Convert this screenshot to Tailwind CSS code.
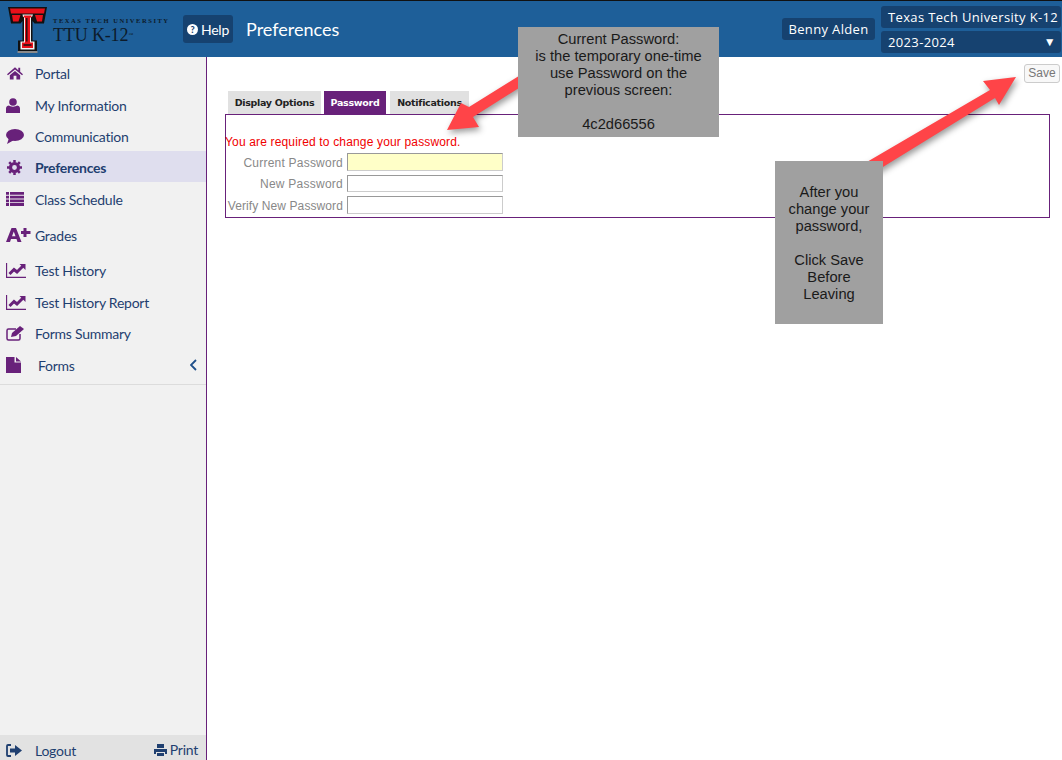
<!DOCTYPE html>
<html><head><meta charset="utf-8"><title>Preferences</title>
<script src="https://cdn.jsdelivr.net/npm/@tailwindcss/browser@4"></script></head>
<body class="m-0 bg-white overflow-hidden font-['Lato',sans-serif]">
<div class="relative w-[1062px] h-[760px] flex flex-col overflow-hidden">
  <header class="h-[57px] shrink-0 bg-[#1e5f99] border-t-[1px] border-[#111] flex items-start text-white">
    <svg class="ml-[8px] mt-[5px] shrink-0" width="40" height="47" viewBox="0 0 40 47">
      <path d="M0 1H39L36 17.500H26.500L24.500 15V34.500H29V46H10V34.500H14.500V15L12.500 17.500H3Z" fill="#111"/>
      <path d="M9.500 45H29.500V47H9.500Z" fill="#8a8a8a"/>
      <path d="M2 2.500H37L36 7.500H3Z" fill="#e8101a"/>
      <path d="M4 9H12.500L10.500 15.500H5ZM27 9H35L34 15.500H29Z" fill="#e8101a"/>
      <path d="M14.500 8.500H25L24 11H23V35.500H26.500V43.500H12.500V35.500H16V11H15Z" fill="#f2f2f2"/>
      <path d="M16 9.500H23.500V11.500H22V36.500H25V42H14V36.500H17V11.500H15.500Z" fill="#e8101a"/>
      <path d="M18.800 12V35.500M15.500 39H23.500" stroke="#111" stroke-width="1.300" fill="none"/>
    </svg>
    <div class="ml-[5px] w-[124px] shrink-0 text-[#0d1b2a] font-['Liberation_Serif',serif]">
      <div class="mt-[15px] text-[6.5px] leading-[9px] font-bold tracking-[1.55px] whitespace-nowrap">TEXAS TECH UNIVERSITY</div>
      <div class="text-[18px] leading-[22px] -mt-[1px] tracking-[-0.15px] whitespace-nowrap">TTU K-12<span class="text-[5px] align-top">™</span></div>
    </div>
    <div class="ml-[6px] mt-[14px] w-[50px] h-[28px] rounded-[3px] bg-[#164270] flex items-center justify-center gap-[3px] text-[14px] tracking-[-0.2px] shrink-0">
      <span class="w-[11px] h-[11px] rounded-full bg-white text-[#164270] text-[9px] font-black leading-[11px] text-center">?</span>Help
    </div>
    <div class="ml-[13px] mt-[16px] text-[18px] leading-[24px]">Preferences</div>
    <div class="ml-auto flex items-start font-['Open_Sans',sans-serif] text-[13px] tracking-[0.35px]">
      <div class="mt-[17px] h-[22px] w-[93px] bg-[#164270] rounded-[3px] leading-[22px] text-center whitespace-nowrap">Benny Alden</div>
      <div class="ml-[6px] mr-[1px] mt-[5px] w-[180px] flex flex-col gap-[3px]">
        <div class="h-[22px] bg-[#164270] rounded-[3px] leading-[22px] pl-[7px] whitespace-nowrap">Texas Tech University K-12</div>
        <div class="h-[22px] bg-[#164270] rounded-[3px] leading-[22px] pl-[7px] flex justify-between pr-[5px]"><span>2023-2024</span><span class="text-[12px]">▼</span></div>
      </div>
    </div>
  </header>
  <div class="flex-1 flex min-h-0">
    <aside class="w-[207px] shrink-0 bg-[#f1f1f1] border-r border-[#68217a] flex flex-col text-[14px] tracking-[-0.25px] text-[#1f3f70]">
      <nav class="pt-[1px] border-b border-[#dcdcdc] h-[328px] flex flex-col">
        <a class="h-[32px] flex items-center pb-[2px]">
          <svg class="ml-[7px] w-[16px]" height="14" viewBox="0 0 17 14" fill="#68217a"><path d="M8.500 1 0 8.200l1 1.200L8.500 3.200 16 9.400l1-1.200-3-2.500V1.500h-2v2.500ZM3 9.500V14h4V10h3v4h4V9.500L8.500 5Z"/></svg>
          <span class="ml-[12px]">Portal</span></a>
        <a class="h-[32px] flex items-center pb-[2px]">
          <svg class="ml-[6px] w-[17px]" height="15" viewBox="0 0 17 15" fill="#68217a"><circle cx="7" cy="4" r="3.800"/><path d="M0 15V10.500C0 8.500 1.500 7.500 3 7.500 4.500 9 9.500 9 11 7.500 12.500 7.500 14 8.500 14 10.500V15Z"/></svg>
          <span class="ml-[12px]">My Information</span></a>
        <a class="h-[29px] flex items-center">
          <svg class="ml-[6px] w-[18px]" height="15" viewBox="0 0 18 15" fill="#68217a"><ellipse cx="9" cy="6" rx="9" ry="6"/><path d="M3 9 1 15 8 11Z"/></svg>
          <span class="ml-[11px]">Communication</span></a>
        <a class="h-[31px] flex items-center pt-[1px] bg-[#dfdeee] font-bold">
          <svg class="ml-[6px] w-[17px]" height="15" viewBox="0 0 15 15" fill="none" stroke="#68217a"><circle cx="7.500" cy="7.500" r="4" stroke-width="3.200"/><path d="M7.500 0V15M0 7.500H15M2.200 2.200 12.800 12.800M12.800 2.200 2.200 12.800" stroke-width="2.500" stroke-dasharray="2.600 9.800 2.600"/></svg>
          <span class="ml-[12px]">Preferences</span></a>
        <a class="h-[36px] flex items-center pb-[2px]">
          <svg class="ml-[6px] w-[18px]" height="14" viewBox="0 0 18 14" fill="#68217a"><path d="M0 0H3V2.800H0ZM4 0H18V2.800H4ZM0 3.700H3V6.500H0ZM4 3.700H18V6.500H4ZM0 7.400H3V10.200H0ZM4 7.400H18V10.200H4ZM0 11.100H3V14H0ZM4 11.100H18V14H4Z"/></svg>
          <span class="ml-[11px]">Class Schedule</span></a>
        <a class="h-[36px] flex items-center pb-[2px]">
          <svg class="ml-[6px] w-[25px] shrink-0" height="15" viewBox="0 0 25 15" fill="#68217a"><path d="M5.500 0H10L15.500 14H11.500L10.500 11H5L4 14H0ZM7.800 3.500 6 8.200H9.500Z" fill-rule="evenodd"/><path d="M18 3H21V6H25V9H21V12H18V9H15.500V6H18Z" transform="translate(-.5 -3)"/></svg>
          <span class="ml-[4px]">Grades</span></a>
        <a class="h-[34px] flex items-center pb-[2px]">
          <svg class="ml-[6px] w-[20px] shrink-0" height="15" viewBox="0 0 20 15" fill="none" stroke="#68217a"><path d="M.5 0V14.500H20" stroke-width="1.300"/><path d="M3.500 11 8 6.500 11 9 17 3" stroke-width="3"/><path d="M13.500 1H19.500V7Z" fill="#68217a" stroke="none"/></svg>
          <span class="ml-[9px]">Test History</span></a>
        <a class="h-[30px] flex items-center pb-[2px]">
          <svg class="ml-[6px] w-[20px] shrink-0" height="15" viewBox="0 0 20 15" fill="none" stroke="#68217a"><path d="M.5 0V14.500H20" stroke-width="1.300"/><path d="M3.500 11 8 6.500 11 9 17 3" stroke-width="3"/><path d="M13.500 1H19.500V7Z" fill="#68217a" stroke="none"/></svg>
          <span class="ml-[9px]">Test History Report</span></a>
        <a class="h-[32px] flex items-center pb-[2px]">
          <svg class="ml-[6px] w-[18px] shrink-0" height="15" viewBox="0 0 18 15" fill="none" stroke="#68217a"><path d="M14 8V12.500Q14 14 12.500 14H2.500Q1 14 1 12.500V4.500Q1 3 2.500 3H10" stroke-width="1.500"/><path d="M5 11 6 7 14 0 18 3 10 10Z" fill="#68217a" stroke="none"/></svg>
          <span class="ml-[11px]">Forms Summary</span></a>
        <a class="h-[32px] flex items-center pb-[2px]">
          <svg class="ml-[6px] w-[15px] shrink-0" height="16" viewBox="0 0 15 16" fill="#68217a"><path d="M0 0H8.500V5.500H15V16H0ZM10 0 15 4.500H10Z"/></svg>
          <span class="ml-[17px]">Forms</span>
          <svg class="ml-auto mr-[9px]" width="7" height="12" viewBox="0 0 7 12" fill="none" stroke="#1f4f8a" stroke-width="1.800"><path d="M6 1 1 6 6 11"/></svg></a>
      </nav>
      <div class="mt-auto h-[25px] bg-[#e2e2e2] flex items-center pt-[6px]">
        <svg class="ml-[6px] w-[16px]" height="13" viewBox="0 0 16 13" fill="#1f3f70"><path d="M5 1H2Q1 1 1 2V11Q1 12 2 12H5" fill="none" stroke="#1f3f70" stroke-width="1.800"/><path d="M4 4.500H9V1L16 6.500 9 12V8.500H4Z"/></svg>
        <span class="ml-[13px]">Logout</span>
        <span class="ml-auto mr-[8px] flex items-center gap-[3px] -mt-[2px]">
          <svg width="13" height="12" viewBox="0 0 13 12" fill="#1f3f70"><path d="M3 0H10V4H3ZM0 5H13V10H11V8H2V10H0ZM3 9H10V12H3Z"/></svg>Print</span>
      </div>
    </aside>
    <main class="relative flex-1 font-['Liberation_Sans',sans-serif]">
      <div class="flex justify-end pt-[7px] pr-[2px]">
        <button class="w-[36px] h-[19px] border border-[#ccc] rounded-[3px] bg-[#f8f8f8] text-[12px] leading-[17px] text-[#777] text-center">Save</button>
      </div>
      <div class="ml-[21px] mt-[8px] w-[822px] flex gap-[3px] text-[9.5px] tracking-[-0.3px] font-bold font-['DejaVu_Sans',sans-serif] text-[#222]">
        <div class="w-[93px] h-[23px] leading-[24px] text-center bg-[#e1e1e1]">Display Options</div>
        <div class="w-[62px] h-[23px] leading-[24px] text-center bg-[#68217a] text-white">Password</div>
        <div class="w-[79px] h-[23px] leading-[24px] text-center bg-[#e1e1e1] ml-[1px]">Notifications</div>
      </div>
      <div class="ml-[18px] w-[825px] h-[104px] border border-[#68217a] text-[12px]">
        <div class="mt-[19px] -ml-[1px] text-[#f00000] leading-[17px] tracking-[0.16px]">You are required to change your password.</div>
        <div class="grid grid-cols-[117px_156px] gap-x-[4px] text-right text-[#888] mt-[2px]">
          <label class="h-[22px] leading-[20px] tracking-[0.22px]">Current Password</label><div class="h-[18px] bg-[#ffffc8] border border-[#ccc] border-t-[#999] border-l-[#999]"></div>
          <label class="h-[21px] leading-[19px] tracking-[0.25px]">New Password</label><div class="h-[17px] bg-white border border-[#ccc] border-t-[#999] border-l-[#999]"></div>
          <label class="h-[18px] leading-[20px] tracking-[0.1px] whitespace-nowrap">Verify New Password</label><div class="h-[18px] bg-white border border-[#ccc] border-t-[#999] border-l-[#999]"></div>
        </div>
      </div>
    </main>
  </div>
  <svg class="absolute left-0 top-0 pointer-events-none drop-shadow-[2px_3px_3px_rgba(0,0,0,0.4)]" width="1062" height="760" fill="#ff4448"><path d="M530 69V81L473 117 479 127 447 130 461 103 469 107Z"/><path d="M860 166 878 170 995 98 999 105 1016 77 983 81 990 90Z"/></svg>
  <div class="absolute left-[518px] top-[27px] w-[201px] h-[110px] bg-[#a0a0a0] pt-[4px] text-center text-[14.7px] leading-[17px] text-[#1a1a1a] font-['Liberation_Sans',sans-serif]">Current Password:<br>is the temporary one-time<br>use Password on the<br>previous screen:<br><br>4c2d66556</div>
  <div class="absolute left-[775px] top-[161px] w-[108px] h-[163px] bg-[#a0a0a0] pt-[23px] text-center text-[14.7px] leading-[17px] text-[#1a1a1a] font-['Liberation_Sans',sans-serif]">After you<br>change your<br>password,<br><br>Click Save<br>Before<br>Leaving</div>
</div>
</body></html>
